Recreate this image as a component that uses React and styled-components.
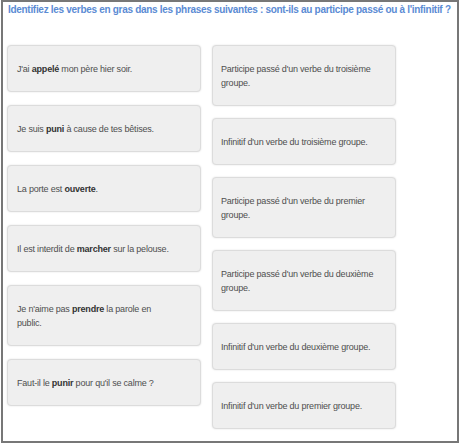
import React from "react";
import styled, { createGlobalStyle } from "styled-components";

const Global = createGlobalStyle`
  body {
    margin: 0;
    background: #fff;
    font-family: "Liberation Sans", Arial, sans-serif;
  }
`;

const Frame = styled.div`
  box-sizing: border-box;
  width: 458px;
  height: 443px;
  margin-left: 1px;
  border: 2px solid #777;
  padding: 1px 4px 0 4px;
`;

const Title = styled.div`
  font-weight: 700;
  font-size: 10px;
  letter-spacing: -0.3px;
  color: #5b8bd4;
  padding-left: 1px;
  height: 14px;
  line-height: 14px;
  white-space: nowrap;
`;

const Columns = styled.div`
  display: flex;
  gap: 11px;
  margin-top: 28px;
`;

const Column = styled.div`
  display: flex;
  flex-direction: column;
  gap: ${(p) => p.$gap}px;
  width: ${(p) => p.$width}px;
`;

const Card = styled.div`
  box-sizing: border-box;
  background: #efefef;
  border: 1px solid #dcdcdc;
  border-radius: 4px;
  box-shadow: 0 0 2px rgba(0, 0, 0, 0.12);
  padding: 15.5px ${(p) => p.$pad}px;
  font-size: 9px;
  line-height: 14px;
  color: #4e4e4e;
`;

const Text = styled.div`
  width: ${(p) => p.$width}px;
  white-space: ${(p) => (p.$nowrap ? "nowrap" : "normal")};
  letter-spacing: -0.2px;

  b {
    color: #333;
    font-weight: 700;
  }
`;

const phrases = [
  <>J'ai <b>appelé</b> mon père hier soir.</>,
  <>Je suis <b>puni</b> à cause de tes bêtises.</>,
  <>La porte est <b>ouverte</b>.</>,
  <>Il est interdit de <b>marcher</b> sur la pelouse.</>,
  <>Je n'aime pas <b>prendre</b> la parole en public.</>,
  <>Faut-il le <b>punir</b> pour qu'il se calme ?</>,
];

const answers = [
  "Participe passé d'un verbe du troisième groupe.",
  "Infinitif d'un verbe du troisième groupe.",
  "Participe passé d'un verbe du premier groupe.",
  "Participe passé d'un verbe du deuxième groupe.",
  "Infinitif d'un verbe du deuxième groupe.",
  "Infinitif d'un verbe du premier groupe.",
];

export default function App() {
  return (
    <>
      <Global />
      <Frame>
        <Title>
          Identifiez les verbes en gras dans les phrases suivantes : sont-ils au participe passé ou à l'infinitif ?
        </Title>
        <Columns>
          <Column $width={194} $gap={13}>
            {phrases.map((p, i) => (
              <Card key={i} $pad={9}>
                <Text $width={150} $nowrap={i === 3}>{p}</Text>
              </Card>
            ))}
          </Column>
          <Column $width={184} $gap={12}>
            {answers.map((a, i) => (
              <Card key={i} $pad={8}>
                <Text $width={166}>{a}</Text>
              </Card>
            ))}
          </Column>
        </Columns>
      </Frame>
    </>
  );
}
